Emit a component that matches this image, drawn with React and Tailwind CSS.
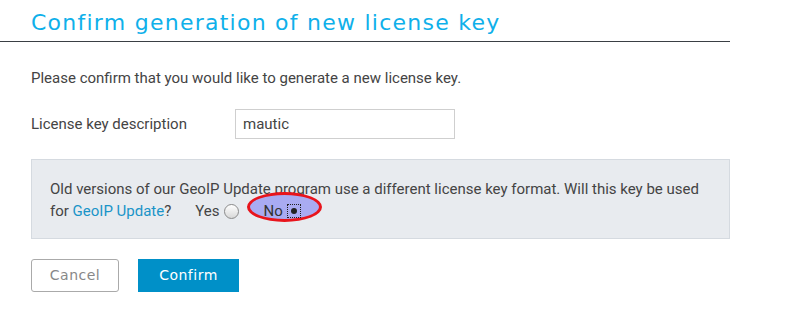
import React, { useState } from 'react';

const App = () => {
    const [forGeoip, setForGeoip] = useState('no');

    return (
        <div className="w-[796px] h-[321px] bg-white font-['Roboto',sans-serif] text-[15px] text-[#444]">
            {/* Header */}
            <div className="w-[730px] border-b border-[#3a3f44] pt-[11px] pb-[7px] pl-[31px]">
                <h1 className="font-['DejaVu_Sans',sans-serif] text-[22px] leading-[23px] text-[#0fb0ea] tracking-[1.25px]">
                    Confirm generation of new license key
                </h1>
            </div>

            <div className="pl-[31px] w-[730px]">
                <p className="mt-[26px] leading-[20px]">Please confirm that you would like to generate a new license key.</p>

                {/* Description field */}
                <div className="mt-[21px] flex items-center">
                    <label className="w-[204px]">License key description</label>
                    <input
                        type="text"
                        defaultValue="mautic"
                        className="w-[220px] h-[30px] border border-[#cfcfcf] px-[7px] text-[15px] text-[#444] outline-none"
                    />
                </div>

                {/* GeoIP notice */}
                <div className="mt-[20px] bg-[#e8ebef] border border-[#d5dae0] h-[80px] pl-[18px] pr-[20px] pt-[18px] leading-[22px]">
                    <p>
                        Old versions of our GeoIP Update program use a different license key format. Will this key be used
                    </p>
                    <div className="flex items-center">
                        <span>
                            for <span className="text-[#1a94c8]">GeoIP Update</span>?
                        </span>
                        <label className="ml-[24px] flex items-center gap-[4px]">
                            Yes
                            <input
                                type="radio"
                                name="geoip"
                                checked={forGeoip === 'yes'}
                                onChange={() => setForGeoip('yes')}
                                className="appearance-none w-[15px] h-[15px] m-0 rounded-full border border-[#8a8a8a] bg-gradient-to-b from-white to-[#d8d8d8]"
                            />
                        </label>
                        <label className="relative ml-[25px] flex items-center gap-[4px]">
                            <span className="absolute left-[-17px] top-[-8px] w-[75px] h-[30px] rounded-[50%] bg-[#a9abf2] border-[3px] border-[#e8141c]" />
                            <span className="relative text-[#333]">No</span>
                            <span className="relative w-[14px] h-[14px] border border-dotted border-[#222] flex items-center justify-center">
                                <span className="w-[6px] h-[6px] rounded-full bg-[#222]" />
                            </span>
                        </label>
                    </div>
                </div>

                {/* Actions */}
                <div className="mt-[20px] flex gap-[19px]">
                    <button className="w-[88px] h-[33px] rounded-[3px] border border-[#aaa] text-[#888] font-['DejaVu_Sans',sans-serif] text-[14px] tracking-[0.5px]">
                        Cancel
                    </button>
                    <button className="w-[101px] h-[33px] bg-[#0090c8] text-white font-['DejaVu_Sans',sans-serif] text-[14px] tracking-[0.5px]">
                        Confirm
                    </button>
                </div>
            </div>
        </div>
    );
};

export default App;
